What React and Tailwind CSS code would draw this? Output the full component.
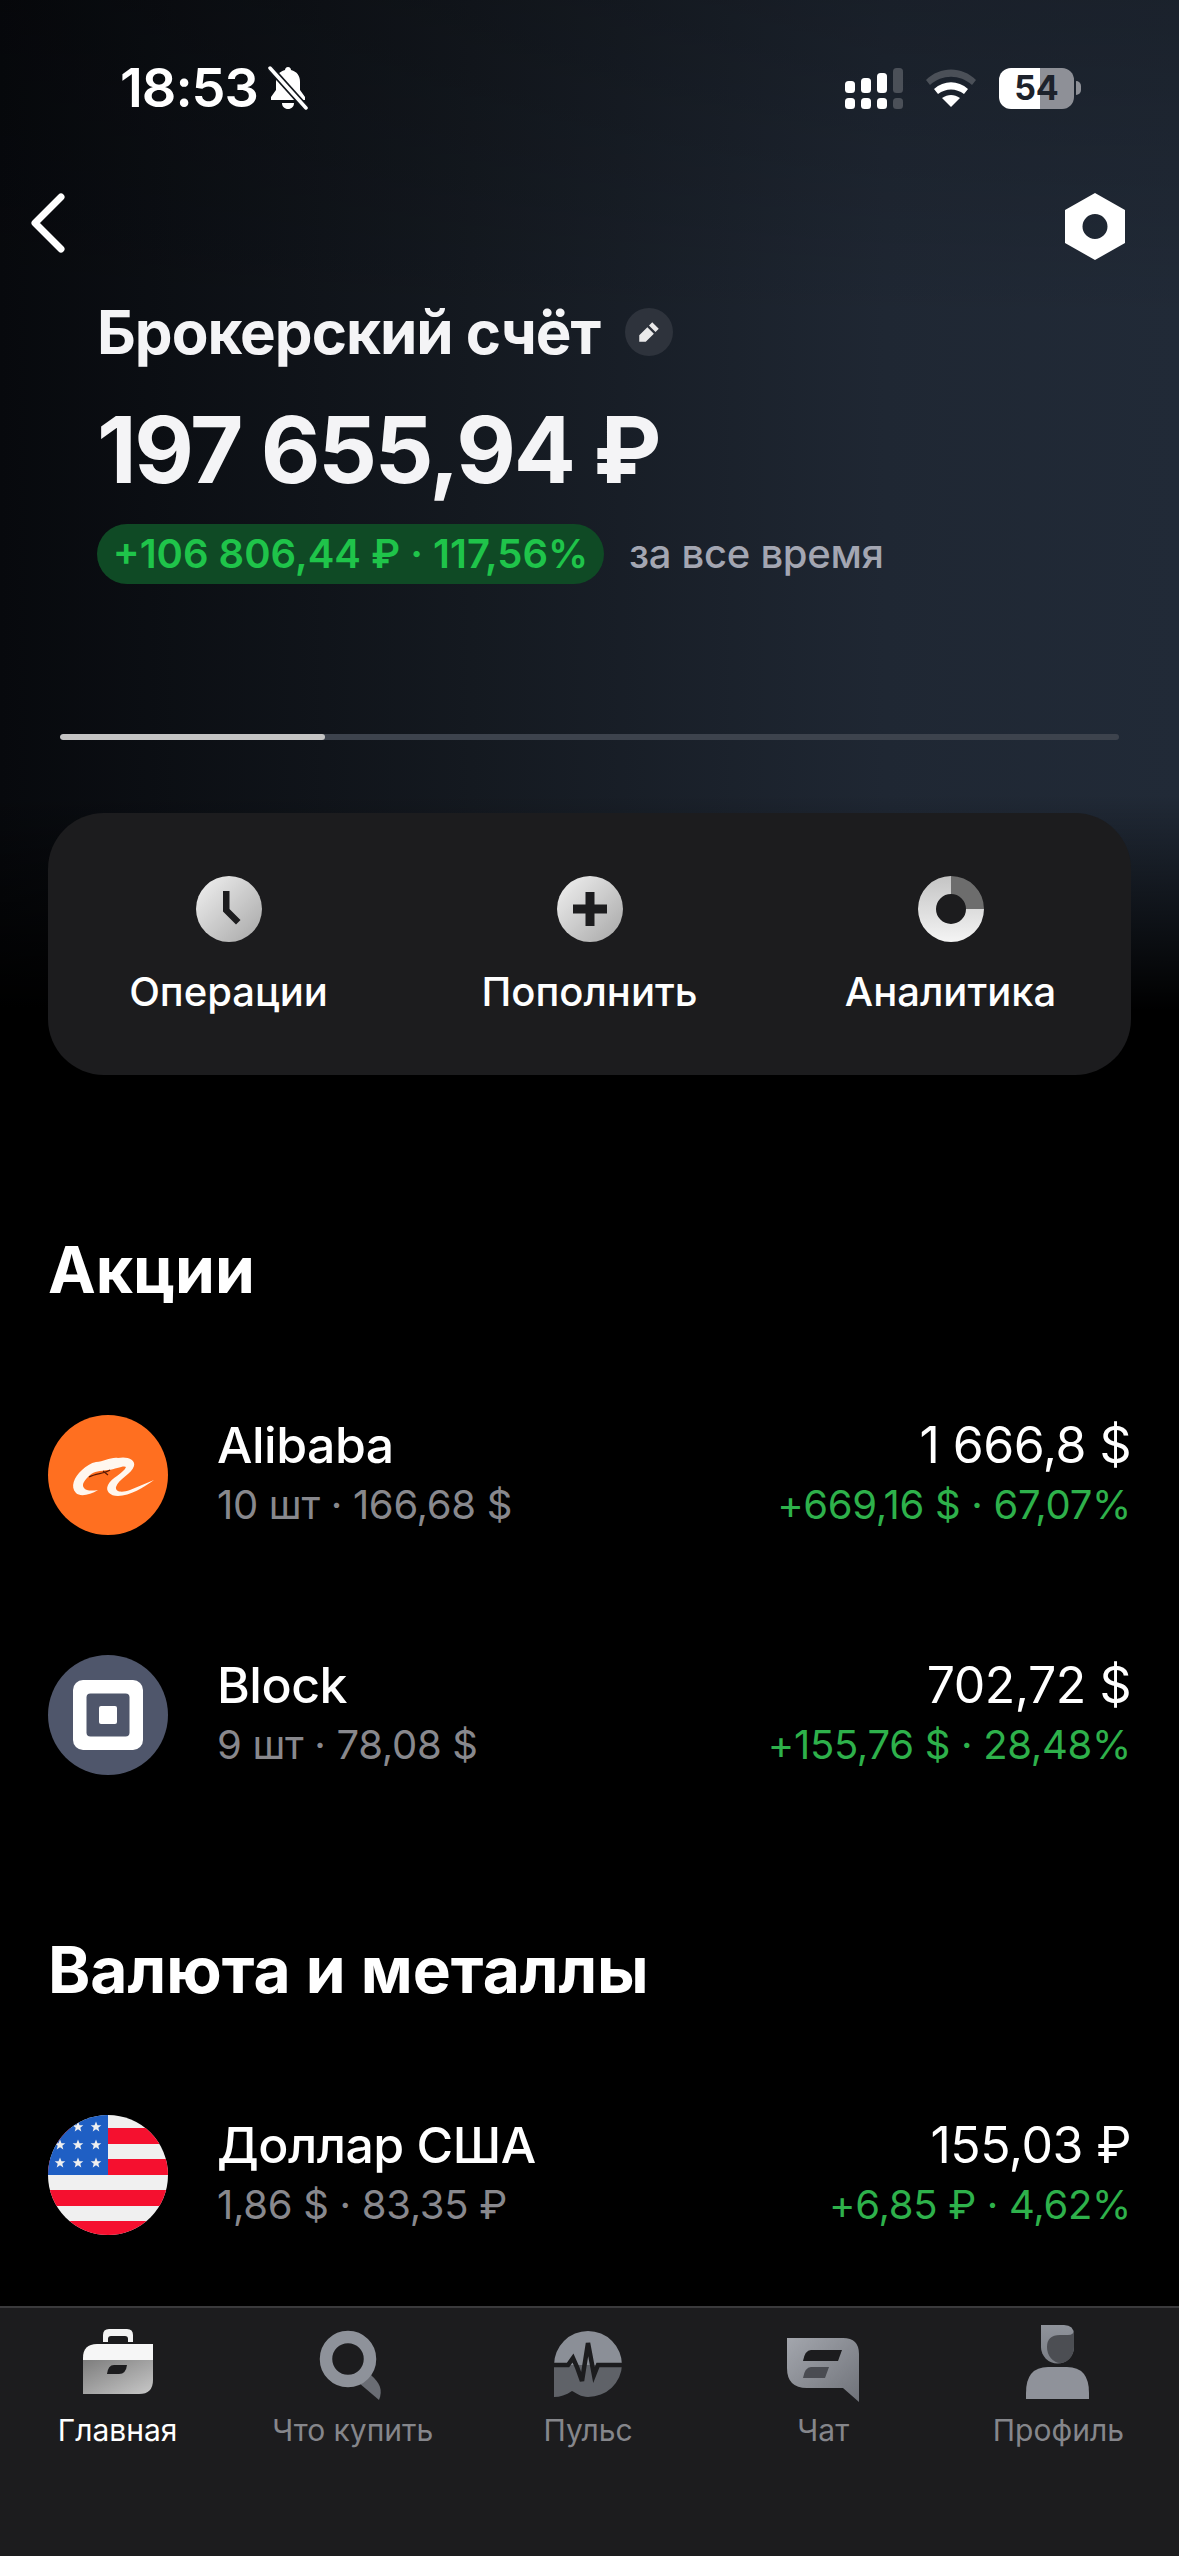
import React from "react";

const font = { fontFamily: "Inter, 'Noto Sans', sans-serif" };

// ---- status bar ----
function BellOff() {
  return (
    <svg width="42" height="44" viewBox="0 0 42 44">
      <path d="M21 1c2 0 3 1.500 3 3 6 1.500 9 6 9 12v8l5 7v3H4v-3l5-7v-8c0-6 3-10.500 9-12 0-1.500 1-3 3-3z" fill="#fff" />
      <path d="M15 37h12c0 3.500-2.500 6-6 6s-6-2.500-6-6z" fill="#fff" />
      <path d="M3 2l36 40" stroke="#12161c" strokeWidth="7" />
      <path d="M3 2l36 40" stroke="#fff" strokeWidth="3.500" strokeLinecap="round" />
    </svg>
  );
}

function Signal() {
  return (
    <svg width="58" height="41" viewBox="0 0 58 41">
      <rect x="0" y="13" width="10" height="12" rx="3.500" fill="#fff" />
      <rect x="16" y="10" width="10" height="15" rx="3.500" fill="#fff" />
      <rect x="32" y="5" width="10" height="20" rx="3.500" fill="#fff" />
      <rect x="48" y="0" width="10" height="25" rx="3.500" fill="#4b5058" />
      <rect x="0" y="30" width="10" height="11" rx="3.500" fill="#fff" />
      <rect x="16" y="30" width="10" height="11" rx="3.500" fill="#fff" />
      <rect x="32" y="30" width="10" height="11" rx="3.500" fill="#fff" />
      <rect x="48" y="30" width="10" height="11" rx="3.500" fill="#4b5058" />
    </svg>
  );
}

function Wifi() {
  return (
    <svg width="50" height="38" viewBox="0 0 50 38">
      <path d="M0 11C14-3 36-3 50 11l-4 5C34 5 16 5 4 16z" fill="#4b5058" />
      <path d="M8 20c10-9 24-9 34 0l-4 5c-8-6-18-6-26 0z" fill="#fff" />
      <path d="M16 29c6-4 12-4 18 0l-9 9z" fill="#fff" />
    </svg>
  );
}

function StatusBar() {
  return (
    <div className="h-[176px] flex items-center pl-[120px] pr-[98px] text-white">
      <span className="text-[54px] font-semibold leading-none tracking-[-1px]">18:53</span>
      <span className="ml-[9px] flex"><BellOff /></span>
      <div className="ml-auto flex items-center">
        <Signal />
        <span className="ml-[23px] flex"><Wifi /></span>
        <div className="ml-[23px] w-[75px] h-[41px] rounded-[12px] bg-[linear-gradient(90deg,#fff_55%,#8e9097_55%)] flex items-center justify-center text-[#1d222b] text-[34px] font-bold leading-none">
          54
        </div>
        <div className="ml-[2px] w-[5px] h-[14px] rounded-r-full bg-[#8e9097]" />
      </div>
    </div>
  );
}

// ---- card icons ----
function ClockIcon() {
  return (
    <svg width="66" height="66" viewBox="0 0 66 66">
      <defs>
        <linearGradient id="metalA" x1="0" y1="0" x2="1" y2="1">
          <stop offset="0" stopColor="#f2f2f2" />
          <stop offset="1" stopColor="#a6a6a6" />
        </linearGradient>
      </defs>
      <circle cx="33" cy="33" r="33" fill="url(#metalA)" />
      <path d="M27 15h6.500v18l11 11-4.500 4.500-13-13z" fill="#1c1c1e" />
    </svg>
  );
}

function PlusIcon() {
  return (
    <svg width="66" height="66" viewBox="0 0 66 66">
      <defs>
        <linearGradient id="metalB" x1="0" y1="0" x2="1" y2="1">
          <stop offset="0" stopColor="#f2f2f2" />
          <stop offset="1" stopColor="#a6a6a6" />
        </linearGradient>
      </defs>
      <circle cx="33" cy="33" r="33" fill="url(#metalB)" />
      <path d="M28.500 16h9v12.500H50v9H37.500V50h-9V37.500H16v-9h12.500z" fill="#1c1c1e" />
    </svg>
  );
}

function DonutIcon() {
  return (
    <svg width="66" height="66" viewBox="0 0 66 66">
      <defs>
        <linearGradient id="metalC" x1="0" y1="0" x2="0" y2="1">
          <stop offset="0" stopColor="#c4c4c4" />
          <stop offset="1" stopColor="#f4f4f4" />
        </linearGradient>
      </defs>
      <path fillRule="evenodd" d="M33 0a33 33 0 1 0 33 33H48A15 15 0 1 1 33 18z" fill="url(#metalC)" />
      <path d="M33 0a33 33 0 0 1 33 33H48a15 15 0 0 0-15-15z" fill="#6d6d6d" />
    </svg>
  );
}

// ---- logos ----
function AlibabaLogo() {
  return (
    <svg width="120" height="120" viewBox="0 0 120 120" className="shrink-0">
      <circle cx="60" cy="60" r="60" fill="#ff6f20" />
      <path d="M48 47C56 47 62 42 70 43C78 41 88 44 86 51C84 59 70 64 68 72C67 77 74 78 82 75C90 72 98 68 106 65C96 72 82 81 70 81C62 81 57 76 60 70C63 63 76 58 78 52C76 50 68 54 60 55C52 56 46 56 42 60C37 65 33 69 36 73C38 76 44 76 50 75C42 80 32 82 28 78C22 72 26 62 34 55C38 51 43 48 48 47Z" fill="#fff7ef" />
      <path d="M41 62C48 58 56 59 62 55M55 56L60 60" fill="none" stroke="#5a1a04" strokeWidth="1.200" />
    </svg>
  );
}

function BlockLogo() {
  return (
    <svg width="120" height="120" viewBox="0 0 120 120" className="shrink-0">
      <circle cx="60" cy="60" r="60" fill="#4f566b" />
      <rect x="25" y="25" width="70" height="70" rx="10" fill="#fff" />
      <rect x="38.500" y="38.500" width="43" height="43" rx="4" fill="#4f566b" />
      <rect x="51" y="51" width="18" height="18" rx="2" fill="#fff" />
    </svg>
  );
}

function Star({ x, y }) {
  return (
    <polygon
      transform={`translate(${x} ${y})`}
      points="0,-5.500 1.500,-1.700 5.300,-1.700 2.300,0.700 3.300,4.500 0,2.300 -3.300,4.500 -2.300,0.700 -5.300,-1.700 -1.500,-1.700"
      fill="#f0f0f0"
    />
  );
}

function UsFlag() {
  const reds = [13, 44, 75, 106];
  const stars = [[30, 12], [48, 12], [12, 30], [30, 30], [48, 30], [12, 48], [30, 48], [48, 48]];
  return (
    <svg width="120" height="120" viewBox="0 0 120 120" className="shrink-0">
      <defs>
        <clipPath id="flagClip"><circle cx="60" cy="60" r="60" /></clipPath>
      </defs>
      <g clipPath="url(#flagClip)">
        <rect width="120" height="120" fill="#f0f0f0" />
        {reds.map((y) => <rect key={y} x="0" y={y} width="120" height="16" fill="#f5102f" />)}
        <rect width="60" height="60" fill="#1f5fc4" />
        {stars.map(([x, y]) => <Star key={`${x}-${y}`} x={x} y={y} />)}
      </g>
    </svg>
  );
}

// ---- bottom nav icons (80x80 box) ----
function BriefcaseIcon() {
  return (
    <svg width="80" height="80" viewBox="0 0 80 80">
      <defs>
        <linearGradient id="caseGrad" x1="0" y1="0" x2="1" y2="1">
          <stop offset="0" stopColor="#7d7d7d" />
          <stop offset="1" stopColor="#c8c8c8" />
        </linearGradient>
      </defs>
      <path d="M25 17V10q0-6 6-6h18q6 0 6 6v7h-5v-3q0-3-3-3H33q-3 0-3 3v3z" fill="#f4f4f4" />
      <path d="M5 35v-2q0-14 14-14h56v16z" fill="#f6f6f6" />
      <path d="M5 35h70v20q0 14-14 14H5z" fill="url(#caseGrad)" />
      <path d="M36 40h13q-1 9-8 9H29q1-9 7-9z" fill="#1c1c1e" />
    </svg>
  );
}

function SearchIcon() {
  return (
    <svg width="80" height="80" viewBox="0 0 80 80">
      <path d="M46 58l12-8c9 8 12 15 8 25z" fill="#6a6d74" />
      <circle cx="35" cy="34" r="22" fill="none" stroke="#8e929a" strokeWidth="12.500" />
    </svg>
  );
}

function PulseIcon() {
  return (
    <svg width="80" height="80" viewBox="0 0 80 80">
      <path d="M6 40a34 34 0 0 1 68 0z" fill="#8b8f97" />
      <path d="M6 40h68a34 33 0 0 1-34 32c-7 0-12-4-16-6-6 4-12 6-18 6z" fill="#5f6268" />
      <path d="M4 40H20L25 33L29 42L34 56L40 18L46 50L50 40H76" fill="none" stroke="#1c1c1e" strokeWidth="4.500" />
    </svg>
  );
}

function ChatIcon() {
  return (
    <svg width="80" height="80" viewBox="0 0 80 80">
      <defs>
        <linearGradient id="chatGrad" x1="0" y1="0" x2="1" y2="1">
          <stop offset="0" stopColor="#a3a6ad" />
          <stop offset="1" stopColor="#6f7279" />
        </linearGradient>
      </defs>
      <path d="M4 13H60Q76 13 76 29V77L60 63H24Q4 63 4 43Z" fill="url(#chatGrad)" />
      <path d="M28 25H59L55 36H20Q22 25 28 25Z" fill="#1c1c1e" />
      <path d="M28 42H46L42 53H20Q22 42 28 42Z" fill="#4a4c52" />
    </svg>
  );
}

function ProfileIcon() {
  return (
    <svg width="80" height="80" viewBox="0 0 80 80">
      <defs>
        <linearGradient id="headGrad" x1="0" y1="0" x2="0" y2="1">
          <stop offset="0" stopColor="#8f939b" />
          <stop offset="1" stopColor="#7b7e85" />
        </linearGradient>
      </defs>
      <path d="M23 0H46Q56 0 56 10V22A16.500 16.500 0 0 1 23 22Z" fill="url(#headGrad)" />
      <path d="M29 22Q29 10 42 10H50Q56 10 56 5V22A13.500 16 0 0 1 29 22Z" fill="#4c4e53" />
      <path d="M8 74V68Q8 42 30 42H49Q71 42 71 68V74Z" fill="#8f929a" />
    </svg>
  );
}

const actions = [
  { label: "Операции", icon: <ClockIcon /> },
  { label: "Пополнить", icon: <PlusIcon /> },
  { label: "Аналитика", icon: <DonutIcon /> },
];

const navItems = [
  { label: "Главная", icon: <BriefcaseIcon />, active: true },
  { label: "Что купить", icon: <SearchIcon /> },
  { label: "Пульс", icon: <PulseIcon /> },
  { label: "Чат", icon: <ChatIcon /> },
  { label: "Профиль", icon: <ProfileIcon /> },
];

function AssetRow({ logo, name, sub, value, change, className }) {
  return (
    <div className={`h-[120px] flex items-center ${className}`}>
      {logo}
      <div className="ml-[49px]">
        <p className="text-[50px] font-medium leading-[54px] text-white tracking-[-0.5px]">{name}</p>
        <p className="mt-[6px] text-[40px] leading-[54px] text-[#88888d] tracking-[-0.3px]">{sub}</p>
      </div>
      <div className="ml-auto text-right">
        <p className="text-[50px] leading-[54px] text-white tracking-[-0.5px]">{value}</p>
        <p className="mt-[6px] text-[40px] leading-[54px] text-[#2eb14b] tracking-[-0.3px]">{change}</p>
      </div>
    </div>
  );
}

export default function App() {
  return (
    <div className="w-[1179px] h-[2556px] bg-black flex flex-col overflow-hidden" style={font}>
      <div className="flex-1 overflow-hidden">
        {/* Hero with gradient */}
        <div className="h-[1074px] bg-[linear-gradient(180deg,rgba(0,0,0,0.2)_0%,rgba(0,0,0,0)_30%,rgba(0,0,0,0)_74%,#000_94%),linear-gradient(90deg,#07090d_0%,#141920_40%,#1f2733_75%,#212a37_100%)]">
          <StatusBar />

          <div className="mt-[17px] h-[67px] flex items-center justify-between pl-[30px] pr-[54px]">
            <svg width="36" height="60" viewBox="0 0 36 60" className="self-start">
              <path d="M31 4L5 30l26 26" fill="none" stroke="#fff" strokeWidth="7" strokeLinecap="round" strokeLinejoin="round" />
            </svg>
            <svg width="60" height="67" viewBox="0 0 60 67">
              <path fillRule="evenodd" d="M30 0l30 17v33L30 67 0 50V17zM30 21a12.500 12.500 0 1 0 0 25 12.500 12.500 0 0 0 0-25z" fill="#fff" />
            </svg>
          </div>

          <div className="pl-[97px] mt-[36px]">
            <div className="flex items-center h-[72px]">
              <h1 className="text-[60px] font-bold leading-none text-[#f4f4f6] tracking-[-1px]">Брокерский счёт</h1>
              <div className="ml-[25px] w-[48px] h-[48px] rounded-full bg-[#2e333c] flex items-center justify-center">
                <svg width="26" height="26" viewBox="0 0 24 24">
                  <path d="M15 3l6 6-3 3-6-6zM10.500 7.500l6 6L9 21H3v-6z" fill="#eaeaea" />
                </svg>
              </div>
            </div>
            <p className="mt-[27px] text-[92px] font-bold leading-[110px] text-[#f4f4f6] tracking-[-2.3px]">197 655,94 ₽</p>
            <div className="mt-[19px] flex items-center">
              <span className="h-[60px] w-[507px] rounded-full bg-[#0f4a25] flex items-center justify-center text-[40px] font-semibold text-[#1fc44a] whitespace-nowrap">
                +106 806,44 ₽ · 117,56%
              </span>
              <span className="ml-[25px] text-[40px] font-medium text-[#a3a6b2] tracking-[-0.3px]">за все время</span>
            </div>
          </div>

          {/* Page progress */}
          <div className="mt-[150px] mx-[60px] h-[6px] rounded-full bg-[#3d434d] overflow-hidden">
            <div className="w-1/4 h-full rounded-full bg-[#c4c4c4]" />
          </div>

          {/* Actions */}
          <div className="mt-[73px] mx-[48px] h-[262px] pt-[4px] rounded-[56px] bg-[#1c1c1e] grid grid-cols-3 items-center">
            {actions.map((a) => (
              <div key={a.label} className="flex flex-col items-center">
                {a.icon}
                <span className="mt-[26px] text-[40px] font-medium leading-[48px] text-white">{a.label}</span>
              </div>
            ))}
          </div>
        </div>

        {/* Assets */}
        <div className="px-[48px]">
          <h2 className="mt-[156px] h-[80px] text-[64px] font-bold leading-[80px] text-white">Акции</h2>
          <AssetRow
            className="mt-[105px]"
            logo={<AlibabaLogo />}
            name="Alibaba"
            sub="10 шт · 166,68 $"
            value="1 666,8 $"
            change="+669,16 $ · 67,07%"
          />
          <AssetRow
            className="mt-[120px]"
            logo={<BlockLogo />}
            name="Block"
            sub="9 шт · 78,08 $"
            value="702,72 $"
            change="+155,76 $ · 28,48%"
          />
          <h2 className="mt-[155px] h-[80px] text-[64px] font-bold leading-[80px] text-white">Валюта и металлы</h2>
          <AssetRow
            className="mt-[105px]"
            logo={<UsFlag />}
            name="Доллар США"
            sub="1,86 $ · 83,35 ₽"
            value="155,03 ₽"
            change="+6,85 ₽ · 4,62%"
          />
        </div>
      </div>

      {/* Bottom nav */}
      <nav className="h-[250px] shrink-0 bg-[#1c1c1e] border-t-2 border-[#3a3a3c] pt-[17px] pr-[3px] grid grid-cols-5 content-start">
        {navItems.map((n) => (
          <div key={n.label} className="flex flex-col items-center">
            {n.icon}
            <span className={`mt-[7px] text-[30px] leading-[36px] whitespace-nowrap ${n.active ? "text-white" : "text-[#85868b]"}`}>
              {n.label}
            </span>
          </div>
        ))}
      </nav>
    </div>
  );
}
